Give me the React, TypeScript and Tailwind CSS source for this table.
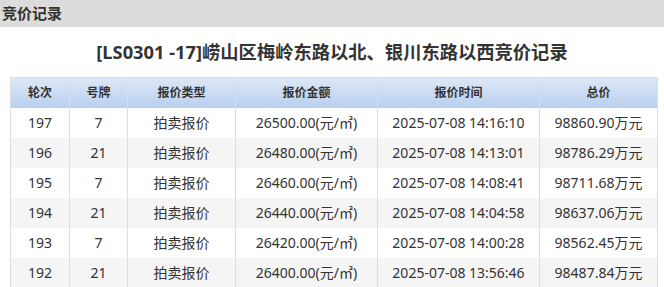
const rows = [
  { round: 197, plate: 7, amount: '26500.00', time: '2025-07-08 14:16:10', total: '98860.90' },
  { round: 196, plate: 21, amount: '26480.00', time: '2025-07-08 14:13:01', total: '98786.29' },
  { round: 195, plate: 7, amount: '26460.00', time: '2025-07-08 14:08:41', total: '98711.68' },
  { round: 194, plate: 21, amount: '26440.00', time: '2025-07-08 14:04:58', total: '98637.06' },
  { round: 193, plate: 7, amount: '26420.00', time: '2025-07-08 14:00:28', total: '98562.45' },
  { round: 192, plate: 21, amount: '26400.00', time: '2025-07-08 13:56:46', total: '98487.84' },
]

const headers = [
  { label: '轮次', w: 'w-[59px]' },
  { label: '号牌', w: 'w-[58px]' },
  { label: '报价类型', w: 'w-[108px]' },
  { label: '报价金额', w: 'w-[142px]' },
  { label: '报价时间', w: 'w-[162px]' },
  { label: '总价', w: 'w-[118px]' },
]

export default function App() {
  return (
    <div className="w-[664px] h-[287px] overflow-hidden bg-white text-[#333] font-['Noto_Sans','Noto_Sans_CJK_SC',sans-serif]">
      {/* top bar */}
      <div className="h-[27px] bg-[#dcdcdc] flex items-center pl-[2px]">
        <span className="text-[15px] font-bold leading-none">竞价记录</span>
      </div>

      <h2 className="text-center text-[18.3px] font-bold leading-none pt-[16px] pb-[16px]">
        [LS0301 -17]崂山区梅岭东路以北、银川东路以西竞价记录
      </h2>

      <div className="px-[10px]">
        <table className="w-[647px] border-collapse table-fixed text-[14px]">
          <thead>
            <tr className="h-[30px] bg-gradient-to-b from-[#dde8f6] to-[#b8cfee]">
              {headers.map((h) => (
                <th
                  key={h.label}
                  className={`${h.w} border-x border-t border-[#dddddd] font-bold text-[12px] text-center`}
                >
                  {h.label}
                </th>
              ))}
            </tr>
          </thead>
          <tbody>
            {rows.map((r, i) => (
              <tr key={r.round} className={`h-[30px] ${i % 2 === 1 ? 'bg-[#f5f5f5]' : 'bg-white'}`}>
                <td className="border-x border-[#dddddd] text-center">{r.round}</td>
                <td className="border-x border-[#dddddd] text-center">{r.plate}</td>
                <td className="border-x border-[#dddddd] text-center">拍卖报价</td>
                <td className="border-x border-[#dddddd] text-center">{r.amount}(元/㎡)</td>
                <td className="border-x border-[#dddddd] text-center">{r.time}</td>
                <td className="border-x border-[#dddddd] text-center">{r.total}万元</td>
              </tr>
            ))}
          </tbody>
        </table>
      </div>
    </div>
  )
}
